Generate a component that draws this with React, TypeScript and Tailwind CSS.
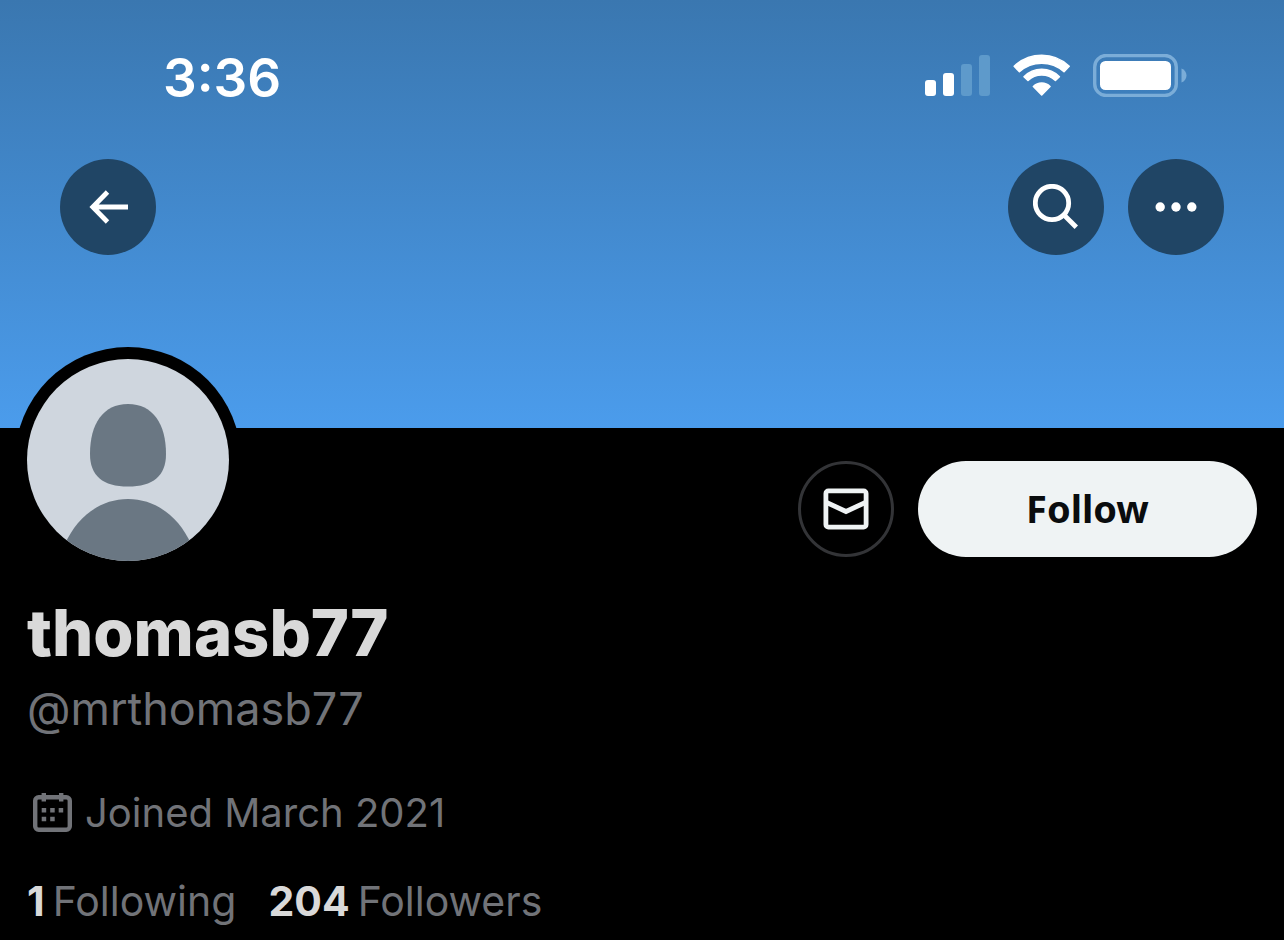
import React from "react";

const StatusIcons: React.FC = () => {
  return (
    <div className="flex items-center gap-[22px] pb-0.5">
      <svg width="66" height="42" viewBox="0 0 66 42" fill="#fff" aria-hidden="true">
        <rect x="0" y="26" width="11" height="16" rx="3" />
        <rect x="18" y="19" width="11" height="23" rx="3" />
        <rect x="36" y="10" width="11" height="32" rx="3" fill="#5e9acb" />
        <rect x="54" y="1" width="11" height="41" rx="3" fill="#5e9acb" />
      </svg>
      <svg
        width="58"
        height="42"
        viewBox="0 0 58 42"
        fill="#fff"
        stroke="#fff"
        strokeWidth="1.6"
        strokeLinejoin="round"
        aria-hidden="true"
      >
        <path d="M1.2 12.3A39.8 39.8 0 0 1 56.2 12.3L51 17.7A33.6 33.6 0 0 0 6.4 17.7Z" />
        <path d="M11 22.7A24.6 24.6 0 0 1 46.4 22.7L42.4 26.5A20 20 0 0 0 15 26.5Z" />
        <path d="M20.4 32.5A12 12 0 0 1 37 32.5L28.7 41Z" />
      </svg>
      <svg width="95" height="43" viewBox="0 0 95 43" fill="none" aria-hidden="true">
        <rect x="1.7" y="1.5" width="81.6" height="40" rx="11.5" stroke="#7badd8" strokeWidth="3.4" />
        <rect x="7" y="7" width="71" height="29" rx="5.5" fill="#fff" />
        <path d="M88.5 14.5C91.5 15.5 93.5 18.3 93.5 21.5C93.5 24.7 91.5 27.5 88.5 28.5Z" fill="#7badd8" />
      </svg>
    </div>
  );
};

const Avatar: React.FC = () => {
  return (
    <div className="-mt-[81px] rounded-full bg-black p-3">
      <svg className="block rounded-full" width="202" height="202" viewBox="0 0 202 202" role="img" aria-label="thomasb77">
        <circle cx="101" cy="101" r="102" fill="#cfd6de" />
        <path
          d="M101 45C126 45 139 65 139 95C139 117 126 127.5 101 127.5C76 127.5 63 117 63 95C63 65 76 45 101 45Z"
          fill="#6a7783"
        />
        <path
          d="M38 185C50 158 73 140 101 140C129 140 152 158 164 185V202H38Z"
          fill="#6a7783"
        />
      </svg>
    </div>
  );
};

const roundButton =
  "flex h-24 w-24 items-center justify-center rounded-full bg-[#204565] text-white";

const App: React.FC = () => {
  return (
    <div className="min-h-screen bg-black font-['Inter',sans-serif] text-[#717378]">
      <header className="bg-linear-to-b from-[#3a77b0] to-[#4b9cec] pt-12 pb-[173px]">
        <div className="flex h-14 items-center justify-between pr-[96px] pl-[163px]">
          <time className="pt-[3px] text-[53px] leading-14 font-semibold text-white">
            3:36
          </time>
          <StatusIcons />
        </div>
        <nav className="mt-[55px] flex items-center justify-between px-[60px]">
          <button type="button" aria-label="Back" className={roundButton}>
            <svg width="40" height="34" viewBox="0 0 40 34" fill="none" stroke="currentColor" strokeWidth="4.8">
              <path d="M40 17H5M19.5 2L4.8 17L19.5 32" />
            </svg>
          </button>
          <div className="flex gap-6">
            <button type="button" aria-label="Search" className={roundButton}>
              <svg width="46" height="46" viewBox="0 0 46 46" fill="none" stroke="currentColor" strokeWidth="4.8">
                <circle cx="19" cy="19" r="16.7" />
                <path d="M31 31L43.3 43.3" />
              </svg>
            </button>
            <button type="button" aria-label="More" className={roundButton}>
              <svg width="42" height="10" viewBox="0 0 42 10" fill="currentColor">
                <circle cx="5.2" cy="5" r="4.7" />
                <circle cx="21" cy="5" r="4.7" />
                <circle cx="36.8" cy="5" r="4.7" />
              </svg>
            </button>
          </div>
        </nav>
      </header>

      <main>
        <div className="flex items-start justify-between pr-[27px] pl-[15px]">
          <Avatar />
          <div className="flex gap-6 pt-[33px]">
            <button
              type="button"
              aria-label="Message"
              className="flex h-24 w-24 items-center justify-center rounded-full border-3 border-[#333437] text-[#eff3f4]"
            >
              <svg width="46" height="42" viewBox="0 0 46 42" fill="none" stroke="currentColor" strokeWidth="4.8">
                <rect x="2.9" y="2.9" width="40.2" height="36.2" rx="2.5" />
                <path d="M2.5 14L23 23.5L43.5 14" />
              </svg>
            </button>
            <button
              type="button"
              className="h-24 w-[339px] rounded-full bg-[#eff3f4] pb-0.5 font-['Noto_Sans',sans-serif] text-[38px] font-bold text-[#0a0c0e]"
            >
              Follow
            </button>
          </div>
        </div>

        <section className="px-[27px] pt-5">
          <h1 className="text-[65px] leading-20 font-extrabold text-[#d9d9d9]">thomasb77</h1>
          <p className="text-[45px] leading-18">@mrthomasb77</p>
          <p className="mt-10 flex items-center gap-3 pl-1 text-[40px] leading-14">
            <svg width="42" height="42" viewBox="0 0 42 42" fill="none" stroke="currentColor" strokeWidth="4.4" aria-hidden="true">
              <rect x="4.2" y="5.2" width="34.6" height="32.6" rx="3.5" />
              <path d="M12.8 1V9.5M30.2 1V9.5" />
              <path d="M10.7 18.3H15.2M19.2 18.3H23.7M27.7 18.3H32.2M10.7 27H15.2M19.2 27H23.7" strokeWidth="4.4" />
            </svg>
            Joined March 2021
          </p>
          <div className="mt-8 flex gap-8 text-[41px] leading-14">
            <a href="#following" className="flex gap-2">
              <span className="font-bold text-[#d9d9d9]">1</span>
              <span>Following</span>
            </a>
            <a href="#followers" className="flex gap-2">
              <span className="font-bold text-[#d9d9d9]">204</span>
              <span>Followers</span>
            </a>
          </div>
        </section>
      </main>
    </div>
  );
};

export default App;
